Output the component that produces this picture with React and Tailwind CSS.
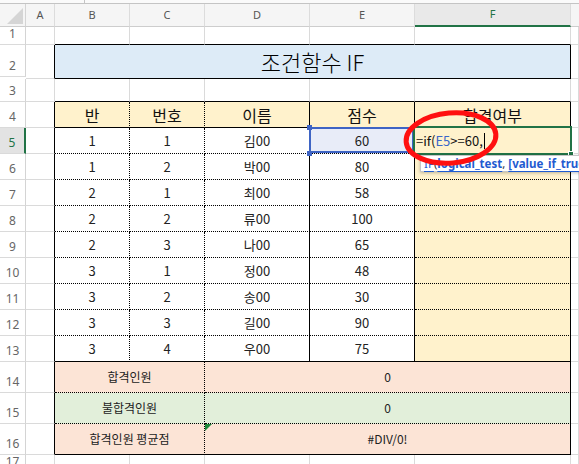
import React from "react";

const GRID = "border-r border-b border-r-[#dadada] border-b-[#dadada]";
const A_BLACK = "border-r border-b border-r-black border-b-[#dadada]";
const TOPLINE = "border-r border-b border-r-[#dadada] border-b-black";
const DOT_BOTH = "border-r border-b border-black [border-right-style:dotted]! [border-bottom-style:dotted]!";
const DOT_R = "border-r border-b border-black [border-right-style:dotted]!";
const DOT_B = "border-r border-b border-black [border-bottom-style:dotted]!";
const SOLID = "border-r border-b border-black";

const CENTER = "flex items-center justify-center";

function RowHead({ n, h, active }) {
  if (active) {
    return (
      <div className={`${h} bg-[#e3e3e3] border-r-2 border-b border-r-[#217346] border-b-[#dadada] flex items-end justify-center pb-[4px] text-[12px] leading-none text-[#217346] font-['Noto_Sans',sans-serif]`}>
        {n}
      </div>
    );
  }
  return (
    <div className={`${h} bg-white border-r border-b border-r-[#d4d4d4] border-b-[#dadada] flex items-end justify-center pb-[4px] text-[12px] leading-none text-[#666] font-['Noto_Sans',sans-serif]`}>
      {n}
    </div>
  );
}

const COLH = "h-[23px] bg-[#f5f5f5] border-r border-b border-r-[#dcdcdc] border-b-[#cdcdcd] flex items-center justify-center text-[11px] text-[#555] font-['Noto_Sans',sans-serif]";

const rows = [
  [1, 1, "김00", 60],
  [1, 2, "박00", 80],
  [2, 1, "최00", 58],
  [2, 2, "류00", 100],
  [2, 3, "나00", 65],
  [3, 1, "정00", 48],
  [3, 2, "송00", 30],
  [3, 3, "길00", 90],
  [3, 4, "우00", 75],
];

function Handle({ cls }) {
  return <div className={`absolute w-[5px] h-[5px] bg-[#3e64c4] ${cls}`} />;
}

export default function App() {
  return (
    <div className="relative w-[579px] h-[464px] overflow-hidden bg-white font-['Noto_Sans_CJK_KR','Noto_Sans',sans-serif] text-[#222]">
      <div className="h-[4px] border-b border-b-[#c4c4c4] bg-[#fafafa]">
        <div className="ml-[84px] w-px h-full bg-[#c4c4c4]" />
      </div>
      <div className="grid grid-cols-[26px_29px_75px_75px_105px_105px_156px_1fr]">
        {/* column headers */}
        <div className="h-[23px] bg-[#f5f5f5] border-r border-b border-r-[#d4d4d4] border-b-[#cdcdcd] flex items-end justify-end">
          <svg width="18" height="18" viewBox="0 0 18 18" className="mb-[1px] mr-[1px]">
            <polygon points="17,1 17,17 1,17" fill="#d5d5d5" />
          </svg>
        </div>
        <div className={COLH}>A</div>
        <div className={COLH}>B</div>
        <div className={COLH}>C</div>
        <div className={COLH}>D</div>
        <div className={COLH}>E</div>
        <div className="h-[23px] bg-[#e9e9e9] border-r border-b-2 border-r-[#dcdcdc] border-b-[#217346] flex items-center justify-center text-[11px] text-[#217346] font-['Noto_Sans',sans-serif]">F</div>
        <div className="h-[23px] bg-[#f5f5f5] border-b border-b-[#cdcdcd]" />

        {/* row 1 */}
        <RowHead n="1" h="h-[18px]" />
        <div className={GRID} />
        <div className={TOPLINE} />
        <div className={TOPLINE} />
        <div className={TOPLINE} />
        <div className={TOPLINE} />
        <div className={TOPLINE} />
        <div className={GRID} />

        {/* row 2 */}
        <RowHead n="2" h="h-[32px]" />
        <div className={A_BLACK} />
        <div className={`col-span-5 bg-[#ddebf7] ${SOLID} ${CENTER} text-[22px] font-light text-black`}>조건함수 IF</div>
        <div className={GRID} />

        {/* row 3 */}
        <RowHead n="3" h="h-[23px]" />
        <div className={GRID} />
        <div className={TOPLINE} />
        <div className={TOPLINE} />
        <div className={TOPLINE} />
        <div className={TOPLINE} />
        <div className={TOPLINE} />
        <div className={GRID} />

        {/* row 4 */}
        <RowHead n="4" h="h-[26px]" />
        <div className={A_BLACK} />
        <div className={`bg-[#fff2cc] ${DOT_R} ${CENTER} text-[16px] text-[#111]`}>반</div>
        <div className={`bg-[#fff2cc] ${DOT_R} ${CENTER} text-[16px] text-[#111]`}>번호</div>
        <div className={`bg-[#fff2cc] ${SOLID} ${CENTER} text-[16px] text-[#111]`}>이름</div>
        <div className={`bg-[#fff2cc] ${SOLID} ${CENTER} text-[16px] text-[#111]`}>점수</div>
        <div className={`bg-[#fff2cc] ${SOLID} ${CENTER} text-[16px] text-[#111]`}>합격여부</div>
        <div className={GRID} />

        {/* data rows */}
        {rows.map((r, i) => {
          const last = i === rows.length - 1;
          const bc = last ? DOT_R : DOT_BOTH;
          const de = last ? SOLID : DOT_B;
          return (
            <React.Fragment key={i}>
              <RowHead n={String(5 + i)} h="h-[26px]" active={i === 0} />
              <div className={A_BLACK} />
              <div className={`${bc} ${CENTER} text-[13px]`}>{r[0]}</div>
              <div className={`${bc} ${CENTER} text-[13px]`}>{r[1]}</div>
              <div className={`${de} ${CENTER} text-[13px]`}>{r[2]}</div>
              {i === 0 ? (
                <div className={`relative bg-[#e8ecf8] ${de} ${CENTER} text-[13px]`}>
                  {r[3]}
                  <div className="absolute -left-[1px] -top-[1px] right-0 bottom-0 border-2 border-[#3e64c4]" />
                  <Handle cls="-left-[3px] -top-[3px]" />
                  <Handle cls="-left-[3px] -bottom-[3px]" />
                  <Handle cls="-right-[3px] -top-[3px]" />
                  <Handle cls="-right-[3px] -bottom-[3px]" />
                </div>
              ) : (
                <div className={`${de} ${CENTER} text-[13px]`}>{r[3]}</div>
              )}
              {i === 0 ? (
                <div className={`relative bg-[#fff2cc] ${de} flex items-center pl-[1px] text-[13px] text-[#111]`}>
                  <span>=if(</span>
                  <span className="text-[#3a66c8]">E5</span>
                  <span>&gt;=60,</span>
                  <span className="ml-[1px] w-px h-[16px] bg-black" />
                  <div className="absolute -left-[2px] -top-[2px] -right-[2px] -bottom-[2px] border-2 border-[#217346]" />
                  <div className="absolute -right-[4px] -bottom-[4px] w-[6px] h-[6px] bg-[#217346] border border-white" />
                </div>
              ) : (
                <div className={`bg-[#fff2cc] ${de}`} />
              )}
              <div className={GRID} />
            </React.Fragment>
          );
        })}

        {/* row 14 */}
        <RowHead n="14" h="h-[31px]" />
        <div className={A_BLACK} />
        <div className={`col-span-2 bg-[#fce4d6] ${DOT_BOTH} ${CENTER} text-[12px]`}>합격인원</div>
        <div className={`col-span-3 bg-[#fce4d6] ${DOT_B} ${CENTER} text-[12px]`}>0</div>
        <div className={GRID} />

        {/* row 15 */}
        <RowHead n="15" h="h-[31px]" />
        <div className={A_BLACK} />
        <div className={`col-span-2 bg-[#e2efda] ${DOT_BOTH} ${CENTER} text-[12px]`}>불합격인원</div>
        <div className={`col-span-3 bg-[#e2efda] ${DOT_B} ${CENTER} text-[12px]`}>0</div>
        <div className={GRID} />

        {/* row 16 */}
        <RowHead n="16" h="h-[31px]" />
        <div className={A_BLACK} />
        <div className={`col-span-2 bg-[#fce4d6] ${DOT_R} ${CENTER} text-[12px]`}>합격인원 평균점</div>
        <div className={`relative col-span-3 bg-[#fce4d6] ${SOLID} ${CENTER} text-[12px]`}>
          #DIV/0!
          <svg width="7" height="7" viewBox="0 0 7 7" className="absolute left-0 top-0">
            <polygon points="0,0 7,0 0,7" fill="#1e8a3c" />
          </svg>
        </div>
        <div className={GRID} />

        {/* row 17 */}
        <RowHead n="17" h="h-[18px]" />
        <div className={GRID} />
        <div className={GRID} />
        <div className={GRID} />
        <div className={GRID} />
        <div className={GRID} />
        <div className={GRID} />
        <div className={GRID} />
      </div>

      {/* function tooltip */}
      <div className="absolute left-[420px] top-[155px] h-[17px] pl-[3px] pr-[6px] bg-white border border-[#c6c6c6] shadow-[0_1px_3px_rgba(0,0,0,0.25)] flex items-center whitespace-nowrap text-[11.5px] leading-none font-['Noto_Sans',sans-serif] text-[#333]">
        <span className="text-[#1f5bd1] underline underline-offset-[3px]">IF</span>
        <span>(</span>
        <span className="text-[#1f5bd1] underline underline-offset-[3px] font-bold">logical_test</span>
        <span>,&nbsp;</span>
        <span className="text-[#1f5bd1] underline underline-offset-[3px] font-bold">[value_if_true]</span>
        <span>, [value_if_false])</span>
      </div>

      {/* red ellipse annotation */}
      <svg width="110" height="70" viewBox="0 0 110 70" className="absolute left-[398px] top-[104px] pointer-events-none">
        <ellipse cx="53" cy="34" rx="45" ry="25" fill="none" stroke="#ff1010" strokeWidth="5" transform="rotate(-5 53 34)" />
      </svg>
    </div>
  );
}
